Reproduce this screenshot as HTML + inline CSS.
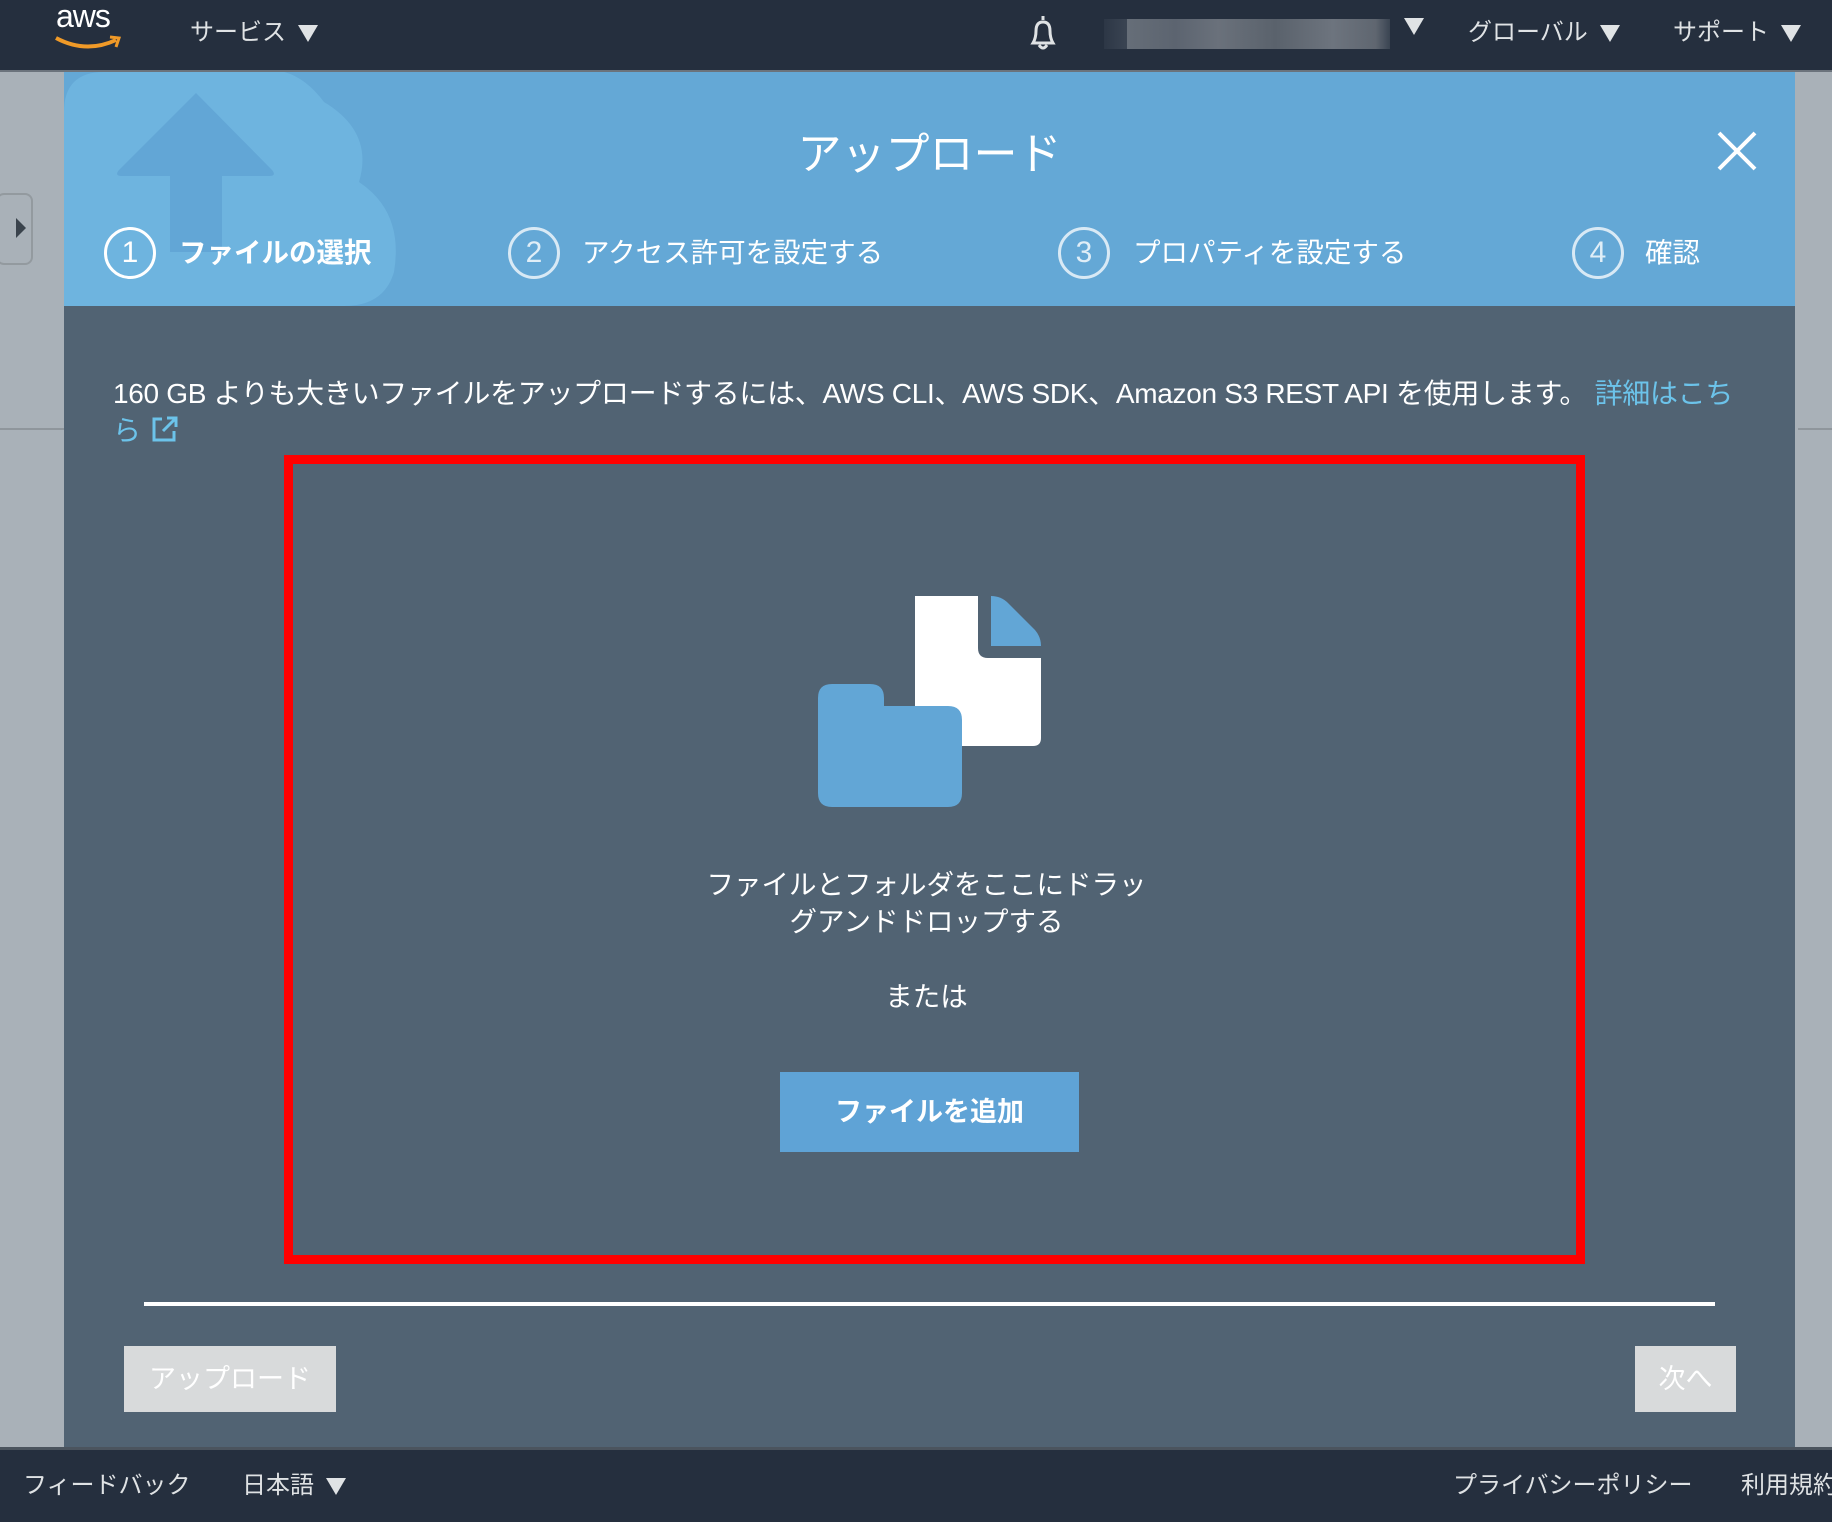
<!DOCTYPE html>
<html><head><meta charset="utf-8"><style>
*{margin:0;padding:0;box-sizing:border-box}
body{width:1832px;height:1522px;overflow:hidden;background:#a9b1b8;font-family:"Liberation Sans","Noto Sans CJK JP",sans-serif;position:relative;color:#fff}
.a{position:absolute;white-space:nowrap}
#hdr{left:0;top:0;width:1832px;height:70px;background:#252f3e}
#hline{left:0;top:70px;width:1832px;height:2px;background:#6b737c}
#modal{left:64px;top:72px;width:1731px;height:1378px;background:#516373}
#mhead{left:64px;top:72px;width:1731px;height:234px;background:#64a8d6;overflow:hidden}
.hn{font-size:24px;color:#e0e3e5;top:12px}
.tri{display:inline-block;width:0;height:0;border-left:10px solid transparent;border-right:10px solid transparent;border-top:17px solid #e0e3e5;margin-left:12px;vertical-align:middle}
.step{top:228px;font-size:27.5px;color:#fff;line-height:50px}
.circ{position:absolute;width:52px;height:52px;border:3px solid rgba(255,255,255,.75);border-radius:50%;font-size:30px;text-align:center;line-height:46px;color:rgba(255,255,255,.8)}
#foot{left:0;top:1450px;width:1832px;height:72px;background:#252f3e}
.ft{font-size:24px;color:#dfe2e4;top:1465px}
</style></head><body>
<div class="a" style="left:0;top:72px;width:61px;height:1378px;background:#a9b1b8"></div>
<div class="a" style="left:0;top:428px;width:64px;height:2px;background:#8f969c"></div>
<div class="a" style="left:1798px;top:428px;width:34px;height:2px;background:#8f969c"></div>
<div class="a" style="left:-4px;top:193px;width:37px;height:72px;border:2px solid #939a9f;border-radius:8px;background:#a9b1b8"></div>
<div class="a" style="left:16px;top:218px;width:0;height:0;border-top:10px solid transparent;border-bottom:10px solid transparent;border-left:10px solid #3a434c"></div>
<div class="a" id="hdr"></div><div class="a" id="hline"></div>
<div class="a" style="left:56px;top:-2px;font-size:32px;color:#fff;letter-spacing:-1px">aws</div>
<svg class="a" style="left:54px;top:34px" width="70" height="18"><path d="M2 4 Q32 20 62 6" stroke="#f09a28" stroke-width="4" fill="none"/><path d="M56 3 L65 4 L62 13" stroke="#f09a28" stroke-width="3" fill="none"/></svg>
<div class="a hn" style="left:190px">サービス<span class="tri"></span></div>
<svg class="a" style="left:1024px;top:13px" width="38" height="40"><path d="M19 3 V7 M9 30 Q12 25 12 18 Q12 9 19 9 Q26 9 26 18 Q26 25 29 30 Z M15 32 Q19 38 23 32" stroke="#dfe2e4" stroke-width="3" fill="none"/></svg>
<div class="a" style="left:1104px;top:19px;width:286px;height:30px;background:linear-gradient(90deg,#2d3746 0,#3a4452 8%,#666e78 8%,#5c6470 25%,#6a717b 40%,#5a626c 60%,#6d747e 80%,#5f6670 95%,#3a4452 100%)"></div>
<div class="a hn" style="left:1392px"><span class="tri"></span></div>
<div class="a hn" style="left:1468px">グローバル<span class="tri"></span></div>
<div class="a hn" style="left:1673px">サポート<span class="tri"></span></div>

<div class="a" id="modal"></div>
<div class="a" id="mhead">
<svg class="a" style="left:0;top:0" width="400" height="234"><path d="M0 234 V40 Q0 0 40 0 H190 Q230 -10 260 30 Q310 60 295 110 Q340 140 330 200 Q320 234 280 234 Z" fill="#6eb4df"/><path d="M132 21 L55 98 Q50 104 58 104 H106 V180 H158 V104 H205 Q213 104 208 98 Z" fill="#62a6d6"/></svg>
</div>
<div class="a" style="left:64px;top:118px;width:1731px;text-align:center;font-size:44px;color:#fff">アップロード</div>
<svg class="a" style="left:1716px;top:130px" width="42" height="42"><path d="M3 3 L39 39 M39 3 L3 39" stroke="#fff" stroke-width="4"/></svg>
<div class="circ" style="left:104px;top:227px;border-color:#fff;color:#fff">1</div>
<div class="a step" style="left:179px;font-weight:bold">ファイルの選択</div>
<div class="circ" style="left:508px;top:227px">2</div>
<div class="a step" style="left:582px">アクセス許可を設定する</div>
<div class="circ" style="left:1058px;top:227px">3</div>
<div class="a step" style="left:1133px">プロパティを設定する</div>
<div class="circ" style="left:1572px;top:227px">4</div>
<div class="a step" style="left:1645px">確認</div>

<div class="a" style="left:113px;top:372px;font-size:28px;color:#fff;letter-spacing:-0.3px">160 GB よりも大きいファイルをアップロードするには、AWS CLI、AWS SDK、Amazon S3 REST API を使用します。 <span style="color:#6cc3ea">詳細はこち</span></div>
<div class="a" style="left:113px;top:409px;font-size:28px;color:#6cc3ea">ら</div>
<svg class="a" style="left:150px;top:414px" width="30" height="30"><path d="M12 5 H4 V26 H24 V17" stroke="#6cc3ea" stroke-width="3" fill="none"/><path d="M13 17 L25 5 M17 4 H26 V13" stroke="#6cc3ea" stroke-width="3" fill="none"/></svg>

<div class="a" style="left:284px;top:455px;width:1301px;height:809px;border:9px solid #ff0000"></div>
<svg class="a" style="left:815px;top:594px" width="230" height="216">
<path d="M100 2 H163 V54 Q163 64 173 64 H226 V144 Q226 152 218 152 H108 Q100 152 100 144 Z" fill="#fff"/>
<path d="M176 2 Q186 2 193 9 L220 36 Q226 43 226 52 H176 Z" fill="#62a6d6"/>
<path d="M3 104 Q3 90 17 90 H55 Q69 90 69 104 V112 H133 Q147 112 147 126 V199 Q147 213 133 213 H17 Q3 213 3 199 Z" fill="#62a6d6"/>
</svg>
<div class="a" style="left:276px;top:866px;width:1301px;text-align:center;font-size:27.5px;line-height:37px">ファイルとフォルダをここにドラッ<br>グアンドドロップする</div>
<div class="a" style="left:276px;top:974px;width:1301px;text-align:center;font-size:27.5px">または</div>
<div class="a" style="left:780px;top:1072px;width:299px;height:80px;background:#5fa3d6;font-size:27px;font-weight:bold;text-align:center;line-height:80px">ファイルを追加</div>

<div class="a" style="left:144px;top:1302px;width:1571px;height:4px;background:#fff"></div>
<div class="a" style="left:124px;top:1346px;width:212px;height:66px;background:#d8dadb;font-size:27px;text-align:center;line-height:66px">アップロード</div>
<div class="a" style="left:1635px;top:1346px;width:101px;height:66px;background:#d8dadb;font-size:27px;text-align:center;line-height:66px">次へ</div>

<div class="a" style="left:0;top:1447px;width:1832px;height:3px;background:#4b545e"></div>
<div class="a" id="foot"></div>
<div class="a ft" style="left:23px">フィードバック</div>
<div class="a ft" style="left:242px">日本語<span class="tri"></span></div>
<div class="a ft" style="left:1453px">プライバシーポリシー</div>
<div class="a ft" style="left:1741px">利用規約</div>
</body></html>
